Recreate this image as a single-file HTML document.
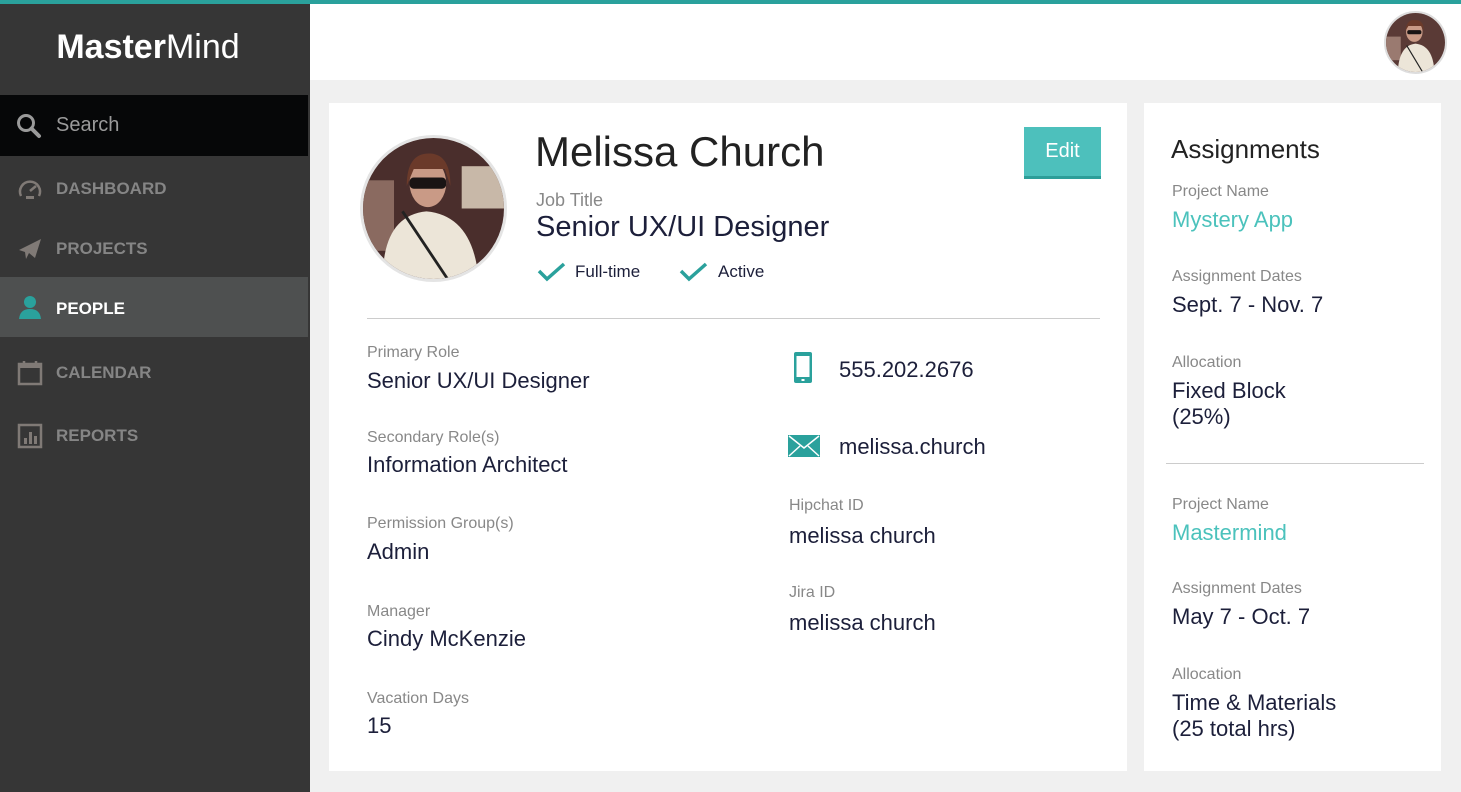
<!DOCTYPE html>
<html><head><meta charset="utf-8"><style>
*{margin:0;padding:0;box-sizing:border-box}
body{width:1461px;height:792px;overflow:hidden;font-family:"Liberation Sans","DejaVu Sans",sans-serif;background:#f0f0f0;position:relative;color:#1c1f3a}
.top{position:absolute;left:0;top:0;width:1461px;height:4px;background:#2aa19c}
.hdr{position:absolute;left:310px;top:4px;width:1151px;height:76px;background:#fff}
.side{position:absolute;left:0;top:4px;width:310px;height:788px;background:#363636}
.logo{position:absolute;top:24px;left:0;width:296px;text-align:center;color:#fff;font-size:34px}
.search{position:absolute;top:91px;left:0;width:308px;height:61px;background:#060708;color:#9a9a9a;font-size:20px}
.nav{position:absolute;left:0;width:308px;height:60px;color:#858585;font-weight:bold;font-size:17px}
.nav span{position:absolute;left:56px;top:50%;transform:translateY(-50%)}
.nav svg{position:absolute;left:17px;top:50%;transform:translateY(-50%)}
.card{position:absolute;background:#fff}
.lbl{position:absolute;color:#888;font-size:16px;margin-top:2px}
.val{position:absolute;color:#1c1f3a;font-size:22px;margin-top:2px}
.teal{color:#4bc2bc}
.av{position:absolute;border-radius:50%;overflow:hidden;border:2px solid #ddd}
</style></head><body>
<div class="top"></div>
<div class="hdr"></div>
<div class="av" style="left:1384px;top:11px;width:63px;height:63px"><svg width="100%" height="100%" viewBox="0 0 100 100" preserveAspectRatio="none"><rect width="100" height="100" fill="#5a3a36"/><rect x="0" y="40" width="25" height="40" fill="#9a7a70"/><path d="M20 100 Q22 55 50 52 Q80 55 82 100Z" fill="#ece5d8"/><ellipse cx="48" cy="32" rx="14" ry="17" fill="#c99a86"/><path d="M33 30 Q35 10 50 12 Q64 12 64 30 L60 22 L38 22Z" fill="#6b3a2a"/><rect x="36" y="29" width="24" height="7" rx="3" fill="#1a1414"/><path d="M35 55 L62 100" stroke="#222" stroke-width="2"/></svg></div>
<div class="side">
 <div class="logo"><b>Master</b>Mind</div>
 <div class="search"><svg style="position:absolute;left:16px;top:18px" width="26" height="26" viewBox="0 0 26 26"><circle cx="10" cy="10" r="7.5" fill="none" stroke="#9a9a9a" stroke-width="3"/><path d="M15.5 15.5 L23 23" stroke="#9a9a9a" stroke-width="4" stroke-linecap="round"/></svg><span style="position:absolute;left:56px;top:19px">Search</span></div>
 <div class="nav" style="top:155px"><svg width="26" height="26" viewBox="0 0 26 26"><path d="M4 20 A10 10 0 1 1 22 20" fill="none" stroke="#807a76" stroke-width="2.5"/><path d="M13 15 L19 10" stroke="#807a76" stroke-width="2.5"/><rect x="9" y="20" width="8" height="3" fill="#807a76"/></svg><span>DASHBOARD</span></div>
 <div class="nav" style="top:215px"><svg width="26" height="26" viewBox="0 0 26 26"><path d="M2 14 L24 3 L18 22 L12 17 L9 23 L8 16Z" fill="#807a76"/></svg><span>PROJECTS</span></div>
 <div class="nav" style="top:273px;background:#4e5050;color:#fff"><svg width="26" height="26" viewBox="0 0 26 26"><circle cx="13" cy="8" r="6" fill="#2aa19c"/><path d="M2 25 Q3 15 13 15 Q23 15 24 25Z" fill="#2aa19c"/></svg><span style="margin-top:2px">PEOPLE</span></div>
 <div class="nav" style="top:339px"><svg width="26" height="26" viewBox="0 0 26 26"><rect x="2" y="4" width="22" height="20" fill="none" stroke="#807a76" stroke-width="2.5"/><rect x="2" y="4" width="22" height="4" fill="#807a76"/><path d="M7 1v5M19 1v5" stroke="#807a76" stroke-width="2.5"/></svg><span>CALENDAR</span></div>
 <div class="nav" style="top:402px"><svg width="26" height="26" viewBox="0 0 26 26"><rect x="2" y="2" width="22" height="22" fill="none" stroke="#807a76" stroke-width="2.5"/><rect x="7" y="15" width="3" height="6" fill="#807a76"/><rect x="12" y="9" width="3" height="12" fill="#807a76"/><rect x="17" y="13" width="3" height="8" fill="#807a76"/></svg><span>REPORTS</span></div>
</div>

<div class="card" style="left:329px;top:103px;width:798px;height:668px">
 <div class="av" style="left:31px;top:32px;width:147px;height:147px;border-width:3px;border-color:#e4e4e4"><svg width="100%" height="100%" viewBox="0 0 100 100" preserveAspectRatio="none"><rect width="100" height="100" fill="#4a2e2c"/><rect x="0" y="30" width="22" height="50" fill="#8a6a60"/><rect x="70" y="20" width="30" height="30" fill="#c8b8a8"/><path d="M14 100 Q14 55 45 52 Q78 55 82 100Z" fill="#ece5d8"/><ellipse cx="46" cy="32" rx="13" ry="17" fill="#c99a86"/><path d="M31 34 Q31 10 48 11 Q62 12 62 34 L58 22 L36 22Z" fill="#6b3a2a"/><rect x="33" y="28" width="26" height="8" rx="3" fill="#1a1414"/><path d="M28 52 L60 100" stroke="#222" stroke-width="2"/></svg></div>
 <div style="position:absolute;left:206px;top:25px;font-size:42px;color:#222">Melissa Church</div>
 <div class="lbl" style="left:207px;top:85px;font-size:18px">Job Title</div>
 <div class="val" style="left:207px;top:106px;font-size:29px">Senior UX/UI Designer</div>
 <svg style="position:absolute;left:208px;top:159px" width="30" height="20" viewBox="0 0 30 20"><path d="M2 9 L10 17 L27 2" fill="none" stroke="#2aa19c" stroke-width="3.5"/></svg>
 <div style="position:absolute;left:246px;top:159px;font-size:17px">Full-time</div>
 <svg style="position:absolute;left:350px;top:159px" width="30" height="20" viewBox="0 0 30 20"><path d="M2 9 L10 17 L27 2" fill="none" stroke="#2aa19c" stroke-width="3.5"/></svg>
 <div style="position:absolute;left:389px;top:159px;font-size:17px">Active</div>
 <div style="position:absolute;left:695px;top:24px;width:77px;height:52px;background:#4dc0bc;border-bottom:3px solid #2d9e99;color:#fff;font-size:20px;text-align:center;line-height:49px">Edit</div>
 <div style="position:absolute;left:38px;top:215px;width:733px;height:1px;background:#ccc"></div>
 <div class="lbl" style="left:38px;top:239px">Primary Role</div><div class="val" style="left:38px;top:263px">Senior UX/UI Designer</div>
 <div class="lbl" style="left:38px;top:324px">Secondary Role(s)</div><div class="val" style="left:38px;top:347px">Information Architect</div>
 <div class="lbl" style="left:38px;top:410px">Permission Group(s)</div><div class="val" style="left:38px;top:434px">Admin</div>
 <div class="lbl" style="left:38px;top:498px">Manager</div><div class="val" style="left:38px;top:521px">Cindy McKenzie</div>
 <div class="lbl" style="left:38px;top:585px">Vacation Days</div><div class="val" style="left:38px;top:608px">15</div>
 <svg style="position:absolute;left:464px;top:248px" width="20" height="33" viewBox="0 0 20 33"><rect x="1" y="1" width="18" height="31" rx="2" fill="#2aa19c"/><rect x="3.5" y="5" width="13" height="21" fill="#fff"/><rect x="8.5" y="28" width="3" height="2" fill="#fff"/></svg>
 <div class="val" style="left:510px;top:252px">555.202.2676</div>
 <svg style="position:absolute;left:459px;top:332px" width="32" height="22" viewBox="0 0 32 22"><rect width="32" height="22" fill="#2aa19c"/><path d="M1 1 L16 13 L31 1 M1 21 L12 11 M31 21 L20 11" fill="none" stroke="#fff" stroke-width="1.5"/></svg>
 <div class="val" style="left:510px;top:329px">melissa.church</div>
 <div class="lbl" style="left:460px;top:392px">Hipchat ID</div><div class="val" style="left:460px;top:418px">melissa church</div>
 <div class="lbl" style="left:460px;top:479px">Jira ID</div><div class="val" style="left:460px;top:505px">melissa church</div>
</div>

<div class="card" style="left:1144px;top:103px;width:297px;height:668px">
 <div style="position:absolute;left:27px;top:31px;font-size:26px;color:#222">Assignments</div>
 <div class="lbl" style="left:28px;top:78px">Project Name</div><div class="val teal" style="left:28px;top:102px">Mystery App</div>
 <div class="lbl" style="left:28px;top:163px">Assignment Dates</div><div class="val" style="left:28px;top:187px">Sept. 7 - Nov. 7</div>
 <div class="lbl" style="left:28px;top:249px">Allocation</div><div class="val" style="left:28px;top:273px;line-height:26px">Fixed Block<br>(25%)</div>
 <div style="position:absolute;left:22px;top:360px;width:258px;height:1px;background:#ccc"></div>
 <div class="lbl" style="left:28px;top:391px">Project Name</div><div class="val teal" style="left:28px;top:415px">Mastermind</div>
 <div class="lbl" style="left:28px;top:475px">Assignment Dates</div><div class="val" style="left:28px;top:499px">May 7 - Oct. 7</div>
 <div class="lbl" style="left:28px;top:561px">Allocation</div><div class="val" style="left:28px;top:585px;line-height:26px">Time &amp; Materials<br>(25 total hrs)</div>
</div>
</body></html>
